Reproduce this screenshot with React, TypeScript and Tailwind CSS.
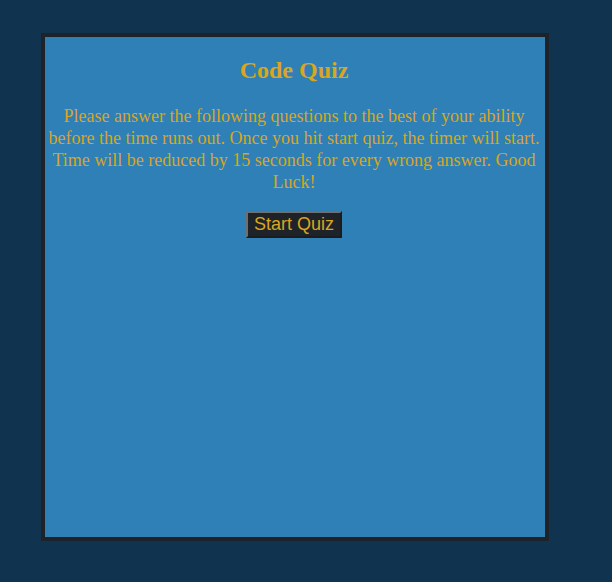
export default function App() {
  return (
    <div className="w-[612px] h-[582px] bg-[#10334f] pt-[33px] pl-[41px]">
      <div className="w-[508px] h-[508px] border-4 border-[#1e2329] bg-[#2e80b6] pr-[2px] flex flex-col items-center text-[#daa520] [font-family:'Liberation_Serif',serif]">
        <h2 className="mt-[20px] text-[24px] font-bold leading-[27.6px]">Code Quiz</h2>
        <p className="mt-[20px] px-[2px] text-[18px] leading-[22px] text-center">
          Please answer the following questions to the best of your ability before the time runs out. Once you hit start quiz, the timer will start. Time will be reduced by 15 seconds for every wrong answer. Good Luck!
        </p>
        <button className="mt-[18px] h-[27px] w-[96px] bg-[#1e2329] text-[#daa520] text-[18px] leading-[21px] border-2 border-solid border-t-[#6f6f6f] border-l-[#6f6f6f] border-r-[#1c1c1c] border-b-[#1c1c1c] [font-family:'Liberation_Sans',Arial,sans-serif]">
          Start Quiz
        </button>
      </div>
    </div>
  );
}
